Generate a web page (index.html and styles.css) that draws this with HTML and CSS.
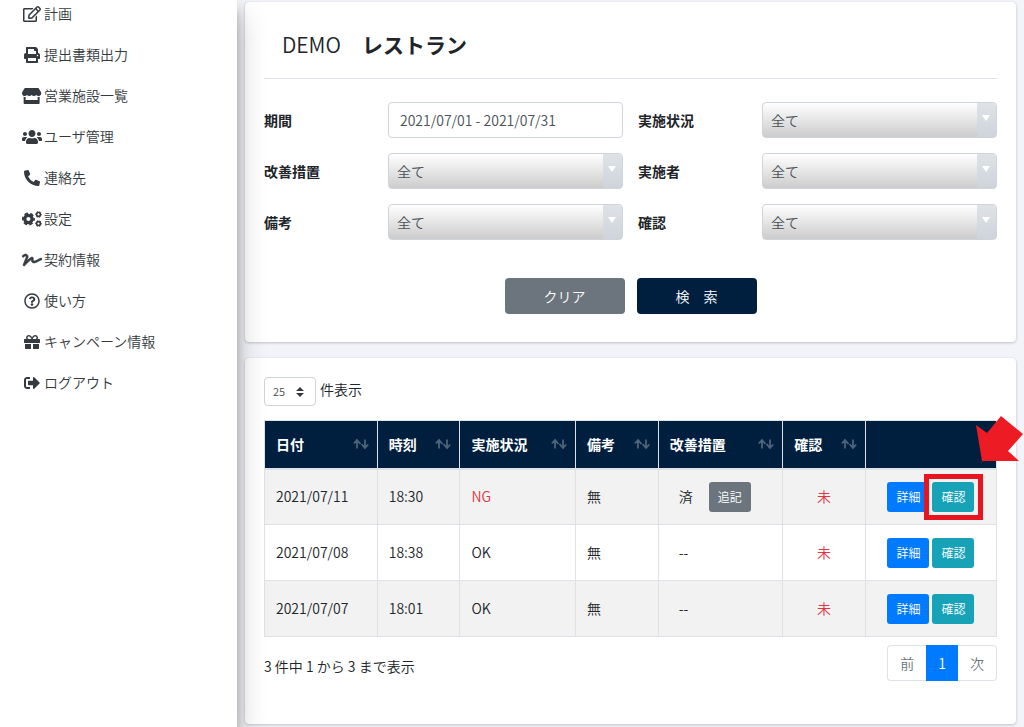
FILE: index.html
```html
<!DOCTYPE html>
<html lang="ja">
<head>
  <meta charset="UTF-8">
  <meta name="viewport" content="width=device-width, initial-scale=1.0">
  <title>DEMO レストラン</title>
  <link rel="stylesheet" href="styles.css">
</head>
<body>
  <svg class="sprite" aria-hidden="true">
    <symbol id="sort" viewBox="0 0 16 10">
      <path d="M4 9.5V1M.8 4.5L4 1l3.5 4M12 .5V9M8.5 5L12 9l3.2-3.5" fill="none" stroke="currentColor" stroke-width="1.8"/>
    </symbol>
  </svg>

  <aside class="sidebar">
    <nav class="menu">
      <a href="#"><span class="icon"><svg viewBox="0 0 576 512"><path d="M402.3 344.9l32-32c5-5 13.7-1.5 13.7 5.7V464c0 26.5-21.5 48-48 48H48c-26.5 0-48-21.5-48-48V112c0-26.5 21.5-48 48-48h273.5c7.1 0 10.7 8.6 5.7 13.7l-32 32c-1.5 1.5-3.5 2.3-5.7 2.3H48v352h352V350.5c0-2.1.8-4.1 2.3-5.6zm156.6-201.8L296.3 405.7l-90.4 10c-26.2 2.9-48.5-19.2-45.6-45.6l10-90.4L432.9 17.1c22.9-22.9 59.9-22.9 82.7 0l43.2 43.2c22.9 22.9 22.9 60 .1 82.8zM460.1 174L402 115.9 216.2 301.8l-7.3 65.3 65.3-7.3L460.1 174zm64.8-79.7l-43.2-43.2c-4.1-4.1-10.8-4.1-14.8 0L436 82l58.1 58.1 30.9-30.9c4-4.2 4-10.8-.1-14.9z"/></svg></span>計画</a>
      <a href="#"><span class="icon"><svg viewBox="0 0 512 512"><path d="M448 192V77.25c0-8.49-3.37-16.62-9.37-22.63L393.37 9.37c-6-6-14.14-9.37-22.63-9.37H96C78.33 0 64 14.33 64 32v160c-35.35 0-64 28.65-64 64v112c0 8.84 7.16 16 16 16h48v96c0 17.67 14.33 32 32 32h320c17.67 0 32-14.33 32-32v-96h48c8.84 0 16-7.16 16-16V256c0-35.35-28.65-64-64-64zm-64 256H128v-96h256v96zm0-224H128V64h192v48c0 8.84 7.16 16 16 16h48v96zm48 72c-13.25 0-24-10.75-24-24 0-13.26 10.75-24 24-24s24 10.74 24 24c0 13.25-10.75 24-24 24z"/></svg></span>提出書類出力</a>
      <a href="#"><span class="icon"><svg viewBox="0 0 616 512"><path d="M602 118.6L537.1 15C531.3 5.7 521 0 510 0H106C95 0 84.7 5.7 78.9 15L14 118.6c-33.5 53.5-3.8 127.9 58.8 136.4 4.5.6 9.1.9 13.7.9 29.6 0 55.8-13 73.8-33.1 18 20.1 44.3 33.1 73.8 33.1 29.6 0 55.8-13 73.8-33.1 18 20.1 44.3 33.1 73.8 33.1 29.6 0 55.8-13 73.8-33.1 18.1 20.1 44.3 33.1 73.8 33.1 4.7 0 9.2-.3 13.7-.9 62.8-8.4 92.6-82.8 59-136.4zM529.5 288c-10 0-19.9-1.5-29.5-3.8V384H116v-99.8c-9.6 2.2-19.5 3.8-29.5 3.8-6 0-12.1-.4-18-1.2-5.6-.8-11.1-2.1-16.4-3.6V480c0 17.7 14.3 32 32 32h448c17.7 0 32-14.3 32-32V283.2c-5.4 1.6-10.8 2.9-16.4 3.6-6.1.8-12.1 1.2-18.2 1.2z"/></svg></span>営業施設一覧</a>
      <a href="#"><span class="icon"><svg viewBox="0 0 640 512"><path d="M96 224c35.3 0 64-28.7 64-64s-28.7-64-64-64-64 28.7-64 64 28.7 64 64 64zm448 0c35.3 0 64-28.7 64-64s-28.7-64-64-64-64 28.7-64 64 28.7 64 64 64zm32 32h-64c-17.6 0-33.5 7.1-45.1 18.6 40.3 22.1 68.9 62 75.1 109.4h66c17.7 0 32-14.3 32-32v-32c0-35.3-28.7-64-64-64zm-256 0c61.9 0 112-50.1 112-112S381.9 32 320 32 208 82.1 208 144s50.1 112 112 112zm76.8 32h-8.3c-20.8 10-43.9 16-68.5 16s-47.6-6-68.5-16h-8.3C179.6 288 128 339.6 128 403.2V432c0 26.5 21.5 48 48 48h288c26.5 0 48-21.5 48-48v-28.8c0-63.6-51.6-115.2-115.2-115.2zm-223.7-13.4C161.5 263.1 145.6 256 128 256H64c-35.3 0-64 28.7-64 64v32c0 17.7 14.3 32 32 32h65.9c6.3-47.4 34.9-87.3 75.2-109.4z"/></svg></span>ユーザ管理</a>
      <a href="#"><span class="icon"><svg viewBox="0 0 512 512"><path d="M497.39 361.8l-112-48a24 24 0 0 0-28 6.9l-49.6 60.6A370.66 370.66 0 0 1 130.6 204.11l60.6-49.6a23.94 23.94 0 0 0 6.9-28l-48-112A24.16 24.16 0 0 0 122.6.61l-104 24A24 24 0 0 0 0 48c0 256.5 207.9 464 464 464a24 24 0 0 0 23.4-18.6l24-104a24.29 24.29 0 0 0-14.01-27.6z"/></svg></span>連絡先</a>
      <a href="#"><span class="icon"><svg viewBox="0 0 640 512">
        <g fill="none" stroke="currentColor">
          <circle cx="205" cy="256" r="118" stroke-width="104"/>
          <circle cx="205" cy="256" r="180" stroke-width="56" pathLength="12" stroke-dasharray="1.2 .8" stroke-dashoffset=".6"/>
          <circle cx="528" cy="110" r="62" stroke-width="52"/>
          <circle cx="528" cy="110" r="94" stroke-width="30" pathLength="12" stroke-dasharray="1" stroke-dashoffset=".5"/>
          <circle cx="528" cy="402" r="62" stroke-width="52"/>
          <circle cx="528" cy="402" r="94" stroke-width="30" pathLength="12" stroke-dasharray="1" stroke-dashoffset=".5"/>
        </g>
      </svg></span>設定</a>
      <a href="#"><span class="icon"><svg viewBox="0 0 640 512"><path d="M623.2 192c-51.8 3.5-125.7 54.7-163.1 71.5-29.1 13.1-54.2 24.4-76.1 24.4-22.6 0-26-16.2-21.3-51.9 1.1-8 11.7-79.2-42.7-76.1-25.1 1.5-64.3 24.8-169.5 126L192 182.2c30.4-75.9-53.2-151.5-129.7-102.8L7.4 116.3C0 121-2.2 130.9 2.5 138.4l17.2 27c4.7 7.5 14.6 9.7 22.1 4.9l58-38.9c18.4-11.7 40.7 7.2 32.7 27.1L34.3 404.1C27.5 421 37 448 64 448c8.3 0 16.5-3.2 22.6-9.4 42.2-42.2 154.7-150.7 211.2-195.8-2.2 28.5-2.1 58.9 20.6 83.8 15.3 16.8 37.3 25.3 65.5 25.3 35.6 0 68-14.6 102.3-30 33-14.8 99-62.6 138.4-65.8 8.5-.7 15.2-7.3 15.2-15.8v-32.1c.2-9.1-7.5-16.8-16.6-16.2z" stroke="currentColor" stroke-width="16"/></svg></span>契約情報</a>
      <a href="#"><span class="icon"><svg viewBox="0 0 512 512"><path d="M256 8C119.043 8 8 119.083 8 256c0 136.997 111.043 248 248 248s248-111.003 248-248C504 119.083 392.957 8 256 8zm0 448c-110.532 0-200-89.431-200-200 0-110.495 89.472-200 200-200 110.491 0 200 89.471 200 200 0 110.53-89.431 200-200 200zm107.244-255.2c0 67.052-72.421 68.084-72.421 92.863V300c0 6.627-5.373 12-12 12h-45.647c-6.627 0-12-5.373-12-12v-8.659c0-35.745 27.1-50.034 47.579-61.516 17.561-9.845 28.324-16.541 28.324-29.579 0-17.246-21.999-28.693-39.784-28.693-23.189 0-33.894 10.977-48.942 29.969-4.057 5.12-11.46 6.071-16.666 2.124l-27.824-21.098c-5.107-3.872-6.251-11.066-2.644-16.363C184.846 131.491 214.94 112 261.794 112c49.071 0 101.45 38.304 101.45 88.8zM298 368c0 23.159-18.841 42-42 42s-42-18.841-42-42 18.841-42 42-42 42 18.841 42 42z"/></svg></span>使い方</a>
      <a href="#"><span class="icon"><svg viewBox="0 0 512 512"><path d="M32 448c0 17.7 14.3 32 32 32h160V320H32v128zm256 32h160c17.7 0 32-14.3 32-32V320H288v160zm192-320h-42.1c6.2-12.1 10.1-25.5 10.1-40 0-48.5-39.5-88-88-88-41.6 0-68.5 21.3-103 68.3-34.5-47-61.4-68.3-103-68.3-48.5 0-88 39.5-88 88 0 14.5 3.8 27.9 10.1 40H32c-17.7 0-32 14.3-32 32v80c0 8.8 7.2 16 16 16h480c8.8 0 16-7.2 16-16v-80c0-17.7-14.3-32-32-32zm-326.1 0c-22.1 0-40-17.9-40-40s17.9-40 40-40c19.9 0 34.6 3.3 86.1 80h-86.1zm206.1 0h-86.1c51.4-76.5 65.7-80 86.1-80 22.1 0 40 17.9 40 40s-17.9 40-40 40z"/></svg></span>キャンペーン情報</a>
      <a href="#"><span class="icon"><svg viewBox="0 0 512 512"><path d="M497 273L329 441c-15 15-41 4.5-41-17v-96H152c-13.3 0-24-10.7-24-24v-96c0-13.3 10.7-24 24-24h136V88c0-21.4 25.9-32 41-17l168 168c9.3 9.4 9.3 24.6 0 34zM192 436v-40c0-6.6-5.4-12-12-12H96c-17.7 0-32-14.3-32-32V160c0-17.7 14.3-32 32-32h84c6.6 0 12-5.4 12-12V76c0-6.6-5.4-12-12-12H96c-53 0-96 43-96 96v192c0 53 43 96 96 96h84c6.6 0 12-5.4 12-12z"/></svg></span>ログアウト</a>
    </nav>
  </aside>

  <main class="content">
    <section class="card search">
      <h1 class="title"><span>DEMO</span>　レストラン</h1>
      <form>
        <div class="fields">
          <div class="field">
            <label for="period">期間</label>
            <input type="text" id="period" value="2021/07/01 - 2021/07/31">
          </div>
          <div class="field">
            <label for="status">実施状況</label>
            <div class="select"><select id="status"><option>全て</option></select></div>
          </div>
          <div class="field">
            <label for="measure">改善措置</label>
            <div class="select"><select id="measure"><option>全て</option></select></div>
          </div>
          <div class="field">
            <label for="person">実施者</label>
            <div class="select"><select id="person"><option>全て</option></select></div>
          </div>
          <div class="field">
            <label for="remarks">備考</label>
            <div class="select"><select id="remarks"><option>全て</option></select></div>
          </div>
          <div class="field">
            <label for="confirm">確認</label>
            <div class="select"><select id="confirm"><option>全て</option></select></div>
          </div>
        </div>
        <div class="actions">
          <button type="button" class="btn gray">クリア</button>
          <button type="button" class="btn navy">検　索</button>
        </div>
      </form>
    </section>

    <section class="card list">
      <div class="length">
        <div class="length-select">
          <select id="length"><option>25</option></select>
          <svg viewBox="0 0 8 10"><path d="M4 0l4 4H0zM4 10l4-4H0z"/></svg>
        </div>
        <label for="length">件表示</label>
      </div>

      <table>
        <colgroup>
          <col class="c-date"><col class="c-time"><col class="c-status"><col class="c-time"><col class="c-measure"><col class="c-time"><col>
        </colgroup>
        <thead>
          <tr>
            <th><div>日付<svg class="sort"><use href="#sort"/></svg></div></th>
            <th><div>時刻<svg class="sort"><use href="#sort"/></svg></div></th>
            <th><div>実施状況<svg class="sort"><use href="#sort"/></svg></div></th>
            <th><div>備考<svg class="sort"><use href="#sort"/></svg></div></th>
            <th><div>改善措置<svg class="sort"><use href="#sort"/></svg></div></th>
            <th><div>確認<svg class="sort"><use href="#sort"/></svg></div></th>
            <th></th>
          </tr>
        </thead>
        <tbody>
          <tr>
            <td>2021/07/11</td>
            <td>18:30</td>
            <td class="red">NG</td>
            <td>無</td>
            <td class="measure"><div>済 <button type="button" class="btn small gray">追記</button></div></td>
            <td class="red center">未</td>
            <td>
              <div class="row-actions">
                <button type="button" class="btn small blue">詳細</button>
                <div class="marked">
                  <button type="button" class="btn small teal">確認</button>
                  <span class="frame"></span>
                  <svg class="arrow" viewBox="0 0 47 45"><path d="M0 9l11 8L25 0l22 18-15 17 11 10H6z"/></svg>
                </div>
              </div>
            </td>
          </tr>
          <tr>
            <td>2021/07/08</td>
            <td>18:38</td>
            <td>OK</td>
            <td>無</td>
            <td class="measure">--</td>
            <td class="red center">未</td>
            <td>
              <div class="row-actions">
                <button type="button" class="btn small blue">詳細</button>
                <button type="button" class="btn small teal">確認</button>
              </div>
            </td>
          </tr>
          <tr>
            <td>2021/07/07</td>
            <td>18:01</td>
            <td>OK</td>
            <td>無</td>
            <td class="measure">--</td>
            <td class="red center">未</td>
            <td>
              <div class="row-actions">
                <button type="button" class="btn small blue">詳細</button>
                <button type="button" class="btn small teal">確認</button>
              </div>
            </td>
          </tr>
        </tbody>
      </table>

      <div class="footer">
        <p>3 件中 1 から 3 まで表示</p>
        <nav class="pages">
          <a href="#">前</a>
          <a href="#" class="active">1</a>
          <a href="#">次</a>
        </nav>
      </div>
    </section>
  </main>
</body>
</html>
```

FILE: styles.css
```css
:root {
  --navy: #001f3f;
  --gray: #6c757d;
  --red: #dc3545;
  --blue: #007bff;
  --teal: #17a2b8;
  --line: #dee2e6;
}
* {
  box-sizing: border-box;
}
body {
  margin: 0;
  display: flex;
  min-height: 100vh;
  background: #f3f4f9;
  color: #212529;
  font-family: "Noto Sans CJK JP", sans-serif;
  font-size: 14px;
  font-weight: 350;
  line-height: 21px;
  overflow-x: hidden;
}
button, input, select {
  font: inherit;
}
.sprite {
  position: absolute;
  width: 0;
  height: 0;
}

/* sidebar */
.sidebar {
  flex: 0 0 237px;
  background: #fff;
  box-shadow: 0 14px 28px rgba(0, 0, 0, 0.25), 0 10px 10px rgba(0, 0, 0, 0.22);
  z-index: 1;
}
.menu {
  display: flex;
  flex-direction: column;
  gap: 20px;
  padding: 3px 22px;
}
.menu a {
  display: flex;
  align-items: center;
  gap: 2px;
  color: #343a40;
  text-decoration: none;
}
.icon {
  display: flex;
  justify-content: center;
  width: 20px;
}
.icon svg {
  height: 16px;
  fill: currentColor;
}

/* cards */
.content {
  flex: 1;
  min-width: 0;
  display: flex;
  flex-direction: column;
  gap: 16px;
  padding: 2px 8px 3px;
}
.card {
  background: #fff;
  border-radius: 4px;
  box-shadow: 0 0 1px rgba(0, 0, 0, 0.13), 0 1px 3px rgba(0, 0, 0, 0.2);
}
.search {
  padding: 0 19px 28px;
}
.title {
  margin: 0 0 23px;
  padding: 26px 18px 18px;
  border-bottom: 1px solid var(--line);
  font-size: 21px;
  line-height: 32px;
}
.title span {
  font-weight: 350;
}
.fields {
  display: grid;
  grid-template-columns: 1fr 1fr;
  gap: 15px;
}
.field {
  display: grid;
  grid-template-columns: 124px 1fr;
  align-items: center;
}
.field label {
  font-weight: bold;
}
.field input, .field select {
  display: block;
  width: 100%;
  height: 36px;
  border: 1px solid #ced4da;
  border-radius: 4px;
  color: #495057;
}
.field input {
  padding: 0 11px;
}
.field select {
  appearance: none;
  padding: 0 8px;
  background: linear-gradient(#fff, #ccc);
}
.select {
  position: relative;
}
.select::before {
  content: "";
  position: absolute;
  top: 1px;
  right: 1px;
  bottom: 1px;
  width: 19px;
  border-radius: 0 3px 3px 0;
  background: linear-gradient(#dfe3e8, #ced4da);
  pointer-events: none;
}
.select::after {
  content: "";
  position: absolute;
  top: 13px;
  right: 7px;
  border: solid transparent;
  border-width: 6px 4px 0;
  border-top-color: #fff;
  pointer-events: none;
}
.actions {
  display: flex;
  justify-content: center;
  gap: 12px;
  margin-top: 38px;
}
.btn {
  width: 120px;
  height: 36px;
  padding: 0;
  border: 0;
  border-radius: 4px;
  color: #fff;
  cursor: pointer;
}
.btn.small {
  width: 42px;
  height: 30px;
  border-radius: 3px;
  font-size: 12px;
}
.gray { background: var(--gray); }
.navy { background: var(--navy); }
.blue { background: var(--blue); }
.teal { background: var(--teal); }

/* list */
.list {
  flex: 1;
  padding: 19px 19px 42px;
}
.length {
  display: flex;
  gap: 4px;
  margin-bottom: 14px;
}
.length label {
  padding-top: 2px;
}
.length-select {
  position: relative;
}
.length-select select {
  display: block;
  appearance: none;
  width: 52px;
  height: 29px;
  padding: 0 8px;
  border: 1px solid #ced4da;
  border-radius: 4px;
  background: #fff;
  color: #495057;
  font-size: 11px;
}
.length-select svg {
  position: absolute;
  top: 10px;
  right: 12px;
  width: 8px;
  height: 10px;
  fill: #343a40;
  pointer-events: none;
}
table {
  width: 100%;
  table-layout: fixed;
  border-collapse: collapse;
}
.c-date { width: 15.4%; }
.c-time { width: 11.3%; }
.c-status { width: 15.8%; }
.c-measure { width: 17%; }
th, td {
  padding: 0 11px;
  border: 1px solid var(--line);
  text-align: left;
}
th {
  height: 48px;
  padding-right: 8px;
  border-bottom-width: 2px;
  background: var(--navy);
  color: #fff;
}
th div {
  display: flex;
  align-items: center;
  justify-content: space-between;
}
.sort {
  width: 16px;
  height: 10px;
  opacity: 0.3;
}
td {
  height: 56px;
}
tbody tr:nth-child(odd) {
  background: #f2f2f2;
}
.red {
  color: var(--red);
}
.center {
  text-align: center;
}
.measure {
  padding-left: 20px;
}
.measure div {
  display: flex;
  align-items: center;
  gap: 16px;
}
.row-actions {
  display: flex;
  justify-content: center;
  gap: 3px;
}
.marked {
  position: relative;
}
.marked .btn {
  display: block;
}
.frame {
  position: absolute;
  inset: -8px -9px -8px -8px;
  border: 5px solid #e8141f;
  pointer-events: none;
}
.arrow {
  position: absolute;
  top: -66px;
  left: 44px;
  width: 47px;
  height: 45px;
  fill: #ed1c24;
  pointer-events: none;
}
.footer {
  display: flex;
  justify-content: space-between;
  padding-top: 8px;
}
.footer p {
  margin: 0;
  padding-top: 11px;
}
.pages {
  display: flex;
  height: 36px;
}
.pages a {
  padding: 7px 12px;
  border: 1px solid var(--line);
  color: var(--gray);
  text-decoration: none;
}
.pages a:first-child {
  border-right: 0;
  border-radius: 4px 0 0 4px;
}
.pages a:last-child {
  border-left: 0;
  border-radius: 0 4px 4px 0;
}
.pages .active {
  padding: 7px 11px;
  border-color: var(--blue);
  background: var(--blue);
  color: #fff;
}
```
